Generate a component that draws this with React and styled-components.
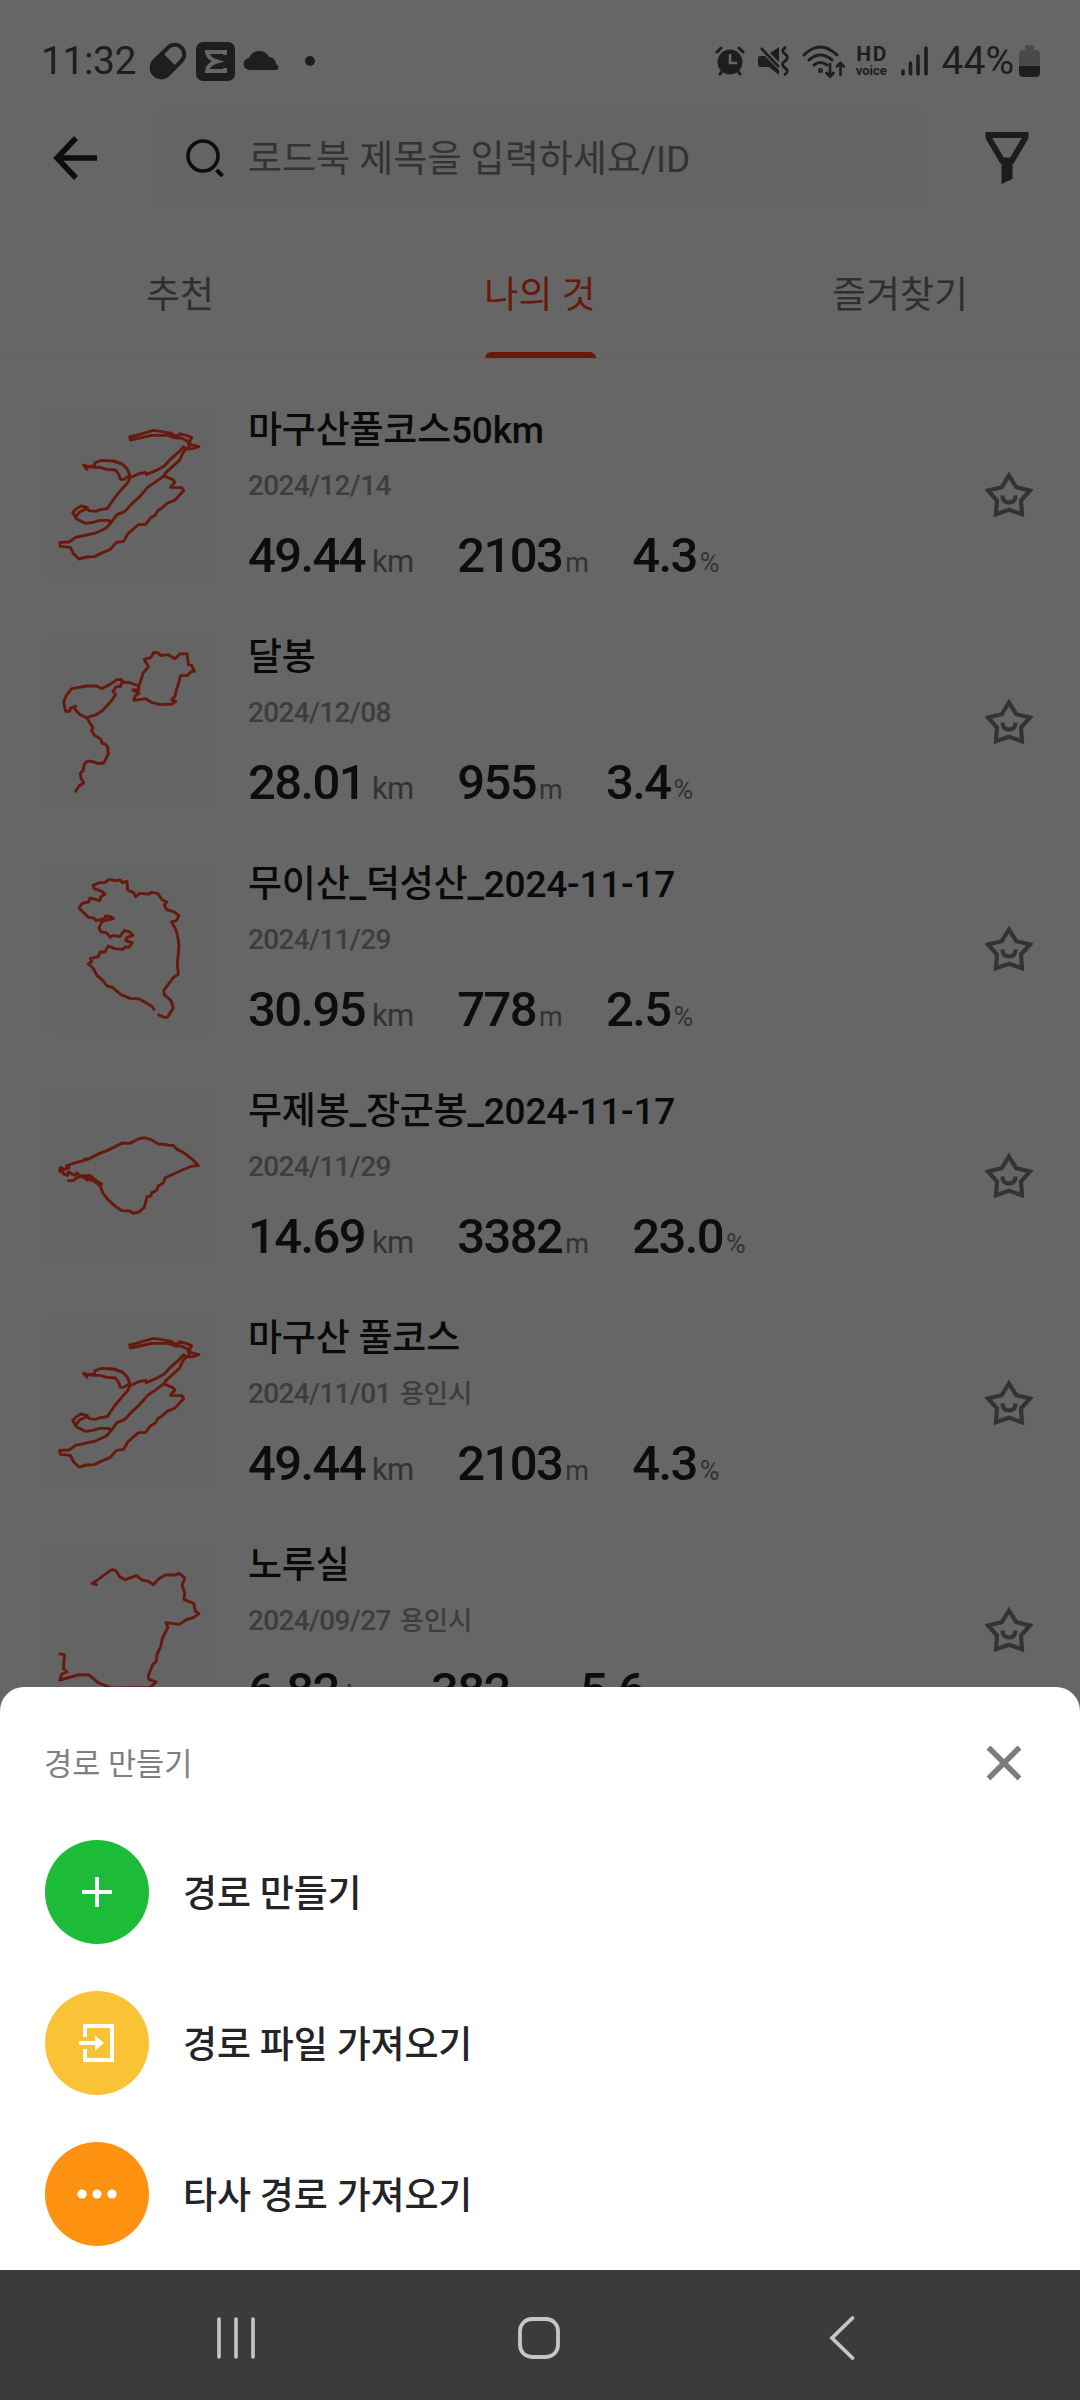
import React, { useState } from 'react';
import styled, { createGlobalStyle } from 'styled-components';

const makguPath =
  'M392 180 L390 171 L410 166 L438 158 L462 151 L482 154 L515 160 L530 170 L540 162 L560 166 L576 173 L570 183 L572 194 L598 200 L580 206 L560 207 L552 200 L535 218 L512 238 L494 258 L468 272 L440 284 L438 277 L418 281 L396 291 L384 290 L372 298 L362 298 L358 285 L348 270 L322 268 L300 262 L280 262 L264 260 L252 255 L262 268 L258 260 L284 258 L286 248 L305 241 L340 243 L368 252 L383 268 L392 290 L384 308 L366 328 L346 352 L330 375 L324 385 L298 390 L288 394 L268 392 L262 382 L244 378 L230 386 L219 397 L230 416 L256 430 L280 427 L300 421 L326 421 L334 428 L320 444 L288 459 L228 472 L208 486 L180 487 L182 499 L212 502 L222 522 L238 537 L262 531 L284 530 L304 520 L332 508 L350 487 L372 484 L384 462 L416 434 L438 433 L452 414 L468 404 L474 392 L490 382 L502 370 L526 360 L552 332 L546 323 L512 322 L526 306 L518 298 L498 290 L496 280 L516 262 L540 240 L550 218 L560 205 M392 180 L420 174 L456 166 L504 166 L530 174 L545 174 L565 184 L568 200 M496 285 L470 304 L444 322 L420 350 L398 370 L376 394 L352 404 L334 428 M262 385 L240 396 L230 408';

const routes = [
  {
    title: '마구산풀코스50km',
    date: '2024/12/14',
    km: '49.44',
    m: '2103',
    pct: '4.3',
    box: '130 84 519 519',
    path: makguPath,
  },
  {
    title: '달봉',
    date: '2024/12/08',
    km: '28.01',
    m: '955',
    pct: '3.4',
    box: '130 75 519 519',
    path: 'M228 544 L238 528 L252 519 L244 504 L242 490 L250 482 L254 462 L264 453 L284 456 L294 461 L312 459 L326 432 L324 410 L316 402 L308 400 L302 386 L284 376 L276 362 L280 354 L262 324 L240 313 L224 296 L228 288 L212 294 L210 304 L198 304 L192 276 L200 256 L216 236 L262 228 L290 228 L306 236 L330 224 L352 209 L364 208 L368 216 L390 218 L418 228 L430 190 L446 170 L434 148 L454 142 L462 128 L472 127 L484 137 L506 134 L526 146 L540 132 L562 131 L566 164 L576 166 L584 184 L574 185 L562 197 L542 197 L538 216 L530 240 L526 258 L516 270 L528 274 L518 282 L482 284 L458 278 L438 266 L402 271 L406 258 L418 250 L400 240 L418 240 L416 228 M368 212 L362 230 L350 230 L340 244 L348 254 L334 274 L308 302 L290 314 L264 322',
  },
  {
    title: '무이산_덕성산_2024-11-17',
    date: '2024/11/29',
    km: '30.95',
    m: '778',
    pct: '2.5',
    box: '130 66 519 519',
    path: 'M463 508 L456 499 L420 477 L392 475 L364 464 L338 442 L322 438 L310 422 L292 406 L280 384 L266 372 L276 364 L272 356 L296 350 L302 336 L316 336 L326 318 L344 326 L370 328 L378 320 L388 322 L398 308 L378 302 L382 292 L400 286 L390 276 L374 271 L360 290 L340 286 L332 292 L320 278 L304 276 L298 264 L306 246 L320 240 L342 236 L334 230 L318 228 L314 236 L290 242 L282 234 L266 232 L250 216 L238 204 L248 190 L266 186 L272 174 L300 182 L304 170 L316 162 L306 154 L284 146 L280 136 L300 128 L314 128 L330 118 L346 122 L362 120 L368 128 L382 124 L384 150 L402 158 L408 170 L420 160 L448 162 L456 157 L474 160 L488 180 L502 186 L494 194 L500 208 L524 216 L538 227 L530 242 L516 246 L530 272 L536 300 L538 320 L533 370 L536 402 L520 414 L492 452 L494 464 L514 482 L521 504 L503 532 L492 532 L477 524',
  },
  {
    title: '무제봉_장군봉_2024-11-17',
    date: '2024/11/29',
    km: '14.69',
    m: '3382',
    pct: '23.0',
    box: '130 87 519 519',
    path: 'M206 362 L220 362 L234 352 L250 350 L262 360 L280 358 L298 376 L306 372 L290 362 L270 346 L240 348 L232 338 L226 346 L206 336 L204 346 L192 342 L188 334 L180 334 L182 322 L192 328 L208 324 L200 318 L228 308 L252 302 L258 296 L250 302 L264 298 L300 280 L322 272 L368 249 L390 250 L416 237 L434 233 L452 238 L476 252 L500 254 L506 256 L520 256 L532 268 L552 278 L578 298 L596 317 L578 318 L548 330 L496 354 L492 368 L476 378 L470 392 L456 398 L454 408 L442 410 L434 442 L418 456 L400 460 L390 453 L366 452 L348 440 L326 420 L310 400 L300 374 L256 348 L266 356',
  },
  {
    title: '마구산 풀코스',
    date: '2024/11/01',
    place: '용인시',
    km: '49.44',
    m: '2103',
    pct: '4.3',
    box: '130 84 519 519',
    path: makguPath,
  },
  {
    title: '노루실',
    date: '2024/09/27',
    place: '용인시',
    km: '6.82',
    m: '382',
    pct: '5.6',
    box: '96 69 388 519',
    path: 'M216 194 L206 190 L216 182 L250 149 L260 152 L268 170 L280 179 L306 167 L318 180 L332 184 L344 194 L354 178 L370 165 L390 165 L402 160 L414 174 L408 196 L414 218 L412 238 L434 250 L438 274 L446 281 L434 292 L416 300 L402 313 L372 308 L376 322 L364 354 L360 380 L352 402 L350 424 L342 434 L332 468 L334 478 L350 486 L336 502 L250 504 L222 490 L198 464 L174 465 L134 480 L138 462 L150 456 L142 446 L144 404 L134 402',
  },
];

const tabs = ['추천', '나의 것', '즐겨찾기'];

const StatusIcons = () => (
  <svg width="140" height="40" viewBox="148 41 140 40" fill="#4d4d4d">
    <g transform="rotate(45 168 61)">
      <rect x="158.5" y="42" width="19" height="38" rx="9.5" fill="none" stroke="#4d4d4d" strokeWidth="4" />
      <path d="M158.5 61h19v9.500a9.500 9.500 0 0 1-19 0z" stroke="#4d4d4d" strokeWidth="4" />
    </g>
    <rect x="196" y="42" width="39" height="39" rx="7" />
    <path d="M225 55v-3h-18q1 7 10 9.500-9 2.500-10 9.500h18v-3" fill="none" stroke="#fff" strokeWidth="4" />
    <path d="M250 70a6 6 0 0 1-1-12 11 11 0 0 1 20-1 7 7 0 0 1 7 7 3.500 3.500 0 0 1 1 6z" />
  </svg>
);

const AlarmIcon = () => (
  <svg width="30" height="30" viewBox="0 0 30 30" fill="#4d4d4d" stroke="#4d4d4d" strokeLinecap="round">
    <circle cx="15" cy="16" r="12.500" stroke="none" />
    <path d="M2 6l4-4M28 6l-4-4M5 28l3-4M25 28l-3-4" strokeWidth="3" />
    <path d="M15 9v8h6" fill="none" stroke="#fff" strokeWidth="2.600" />
  </svg>
);

const MuteIcon = () => (
  <svg width="31" height="30" viewBox="0 0 31 30" fill="#4d4d4d">
    <path d="M2 10h5l14 14v5l-10-8H3q-3 0-3-3v-5q0-3 2-3zM12 7l9-6v15z" />
    <path d="M3 2l18 19" stroke="#4d4d4d" strokeWidth="2.600" />
    <path d="M28 1q-6 3.500-1 7t0 7 0 7-1 7" fill="none" stroke="#4d4d4d" strokeWidth="2.800" />
  </svg>
);

const WifiIcon = () => (
  <svg width="43" height="33" viewBox="0 0 43 33" fill="none" stroke="#4d4d4d" strokeWidth="3" strokeLinecap="round">
    <path d="M2 10q16-16 33 0M7 15q11.500-10 23 0M12 20q6-5 13 0" />
    <circle cx="18.500" cy="25.500" r="1" />
    <path d="M28 19v12M24.500 28l3.500 3.500 3.500-3.500M38.500 30V18M35 21.500l3.500-3.500 3.500 3.500" strokeWidth="2.700" />
  </svg>
);

const SignalIcon = () => (
  <svg width="27" height="30" viewBox="0 0 27 30" stroke="#4d4d4d" strokeWidth="3.600" strokeLinecap="round">
    <path d="M2 25v3M9.500 17v11M17 10v18M25 2v26" />
  </svg>
);

const BatteryIcon = () => (
  <svg width="22" height="33" viewBox="0 0 22 33">
    <path d="M6 5V2q0-2 2-2h5q2 0 2 2v3h2q4 0 4 4v13H0V9q0-4 4-4z" fill="#b8b8b8" />
    <path d="M0 21h21v7q0 4-4 4H4q-4 0-4-4z" fill="#4d4d4d" />
  </svg>
);

const BackIcon = () => (
  <svg width="46" height="44" viewBox="0 0 46 44" fill="none" stroke="#222" strokeWidth="5.500">
    <path d="M23 2L4 22l19 20M4 22h40" />
  </svg>
);

const SearchIcon = () => (
  <svg width="38" height="38" viewBox="0 0 38 38" fill="none" stroke="#222" strokeWidth="3.600">
    <circle cx="17" cy="17" r="15" />
    <path d="M30.500 31l6 6" strokeWidth="4" />
  </svg>
);

const FilterIcon = () => (
  <svg width="44" height="52" viewBox="0 0 44 52">
    <path d="M3.500 3h37v2.500L27 28.500H17L3.500 5.500z" fill="none" stroke="#45474e" strokeWidth="6" />
    <path d="M16.500 28h11v19l-11 5z" fill="#45474e" />
  </svg>
);

const StarIcon = () => (
  <svg width="48" height="47" viewBox="0 0 48 47" fill="none" stroke="#808080" strokeWidth="4.200">
    <path d="M24 4.500L31.200 16.200 45 19.500 36 29.500 37 43.200 24 38.800 11 43.200 12 29.500 3 19.500 16.800 16.200z" />
    <path d="M17.500 24.500q0 7 6.500 7t6.500-7" />
  </svg>
);

const CloseIcon = () => (
  <svg width="36" height="36" viewBox="0 0 36 36" stroke="#7c7c80" strokeWidth="5.500">
    <path d="M2.500 2.500l31 31M33.500 2.500l-31 31" />
  </svg>
);

const PlusIcon = () => (
  <svg width="32" height="32" viewBox="0 0 32 32" stroke="#fff" strokeWidth="4">
    <path d="M16 1v30M1 16h30" />
  </svg>
);

const ImportIcon = () => (
  <svg width="36" height="40" viewBox="0 0 36 40" fill="none" stroke="#fff" strokeWidth="4">
    <path d="M6 14V3h27v34H6V26M0 20h18" />
    <path d="M16 12.500l9 7.500-9 7.500z" fill="#fff" stroke="none" />
  </svg>
);

const DotsIcon = () => (
  <svg width="40" height="10" viewBox="0 0 40 10" fill="#fff">
    <circle cx="5" cy="5" r="4.600" />
    <circle cx="20" cy="5" r="4.600" />
    <circle cx="35" cy="5" r="4.600" />
  </svg>
);

const actions = [
  { label: '경로 만들기', color: '#1cbb38', icon: <PlusIcon /> },
  { label: '경로 파일 가져오기', color: '#fac336', icon: <ImportIcon /> },
  { label: '타사 경로 가져오기', color: '#ff9211', icon: <DotsIcon /> },
];

const RouteItem = ({ route }) => (
  <Row>
    <Thumb>
      <svg width="173" height="173" viewBox={route.box} preserveAspectRatio="none">
        <path
          d={route.path}
          fill="none"
          stroke="#ff3f20"
          strokeWidth="2.9"
          strokeLinejoin="round"
          strokeLinecap="round"
          vectorEffect="non-scaling-stroke"
        />
      </svg>
    </Thumb>
    <Info>
      <Title>{route.title}</Title>
      <Meta>
        <span>{route.date}</span>
        {route.place && <Place>{route.place}</Place>}
      </Meta>
      <Stats>
        <Stat>{route.km}<Unit $large>km</Unit></Stat>
        <Stat>{route.m}<Unit>m</Unit></Stat>
        <Stat>{route.pct}<Unit>%</Unit></Stat>
      </Stats>
    </Info>
    <FavoriteButton>
      <StarIcon />
    </FavoriteButton>
  </Row>
);

const App = () => {
  const [activeTab, setActiveTab] = useState('나의 것');

  return (
    <Screen>
      <GlobalStyle />
      <StatusBar>
        <StatusGroup>
          <Clock>11:32</Clock>
          <StatusIcons />
          <MoreDot />
        </StatusGroup>
        <StatusRight>
          <AlarmIcon />
          <MuteIcon />
          <WifiIcon />
          <HdVoice>
            <b>HD</b>
            <span>voice</span>
          </HdVoice>
          <SignalIcon />
          <BatteryGroup>
            <Percent>44%</Percent>
            <BatteryIcon />
          </BatteryGroup>
        </StatusRight>
      </StatusBar>

      <Header>
        <BackIcon />
        <SearchBox>
          <SearchIcon />
          <Placeholder>로드북 제목을 입력하세요/ID</Placeholder>
        </SearchBox>
        <FilterIcon />
      </Header>

      <TabBar>
        {tabs.map((tab) => (
          <Tab key={tab} $active={tab === activeTab} onClick={() => setActiveTab(tab)}>
            <TabLabel>{tab}</TabLabel>
          </Tab>
        ))}
      </TabBar>

      <List>
        {routes.map((route, index) => (
          <RouteItem key={index} route={route} />
        ))}
      </List>

      <Overlay>
        <Sheet>
          <SheetHeader>
            <SheetTitle>경로 만들기</SheetTitle>
            <CloseIcon />
          </SheetHeader>
          {actions.map((action) => (
            <Action key={action.label}>
              <ActionIcon $color={action.color}>{action.icon}</ActionIcon>
              <ActionLabel>{action.label}</ActionLabel>
            </Action>
          ))}
        </Sheet>
        <NavBar>
          <svg width="38" height="42" viewBox="0 0 38 42" stroke="#c5c6c6" strokeWidth="3.600" strokeLinecap="round">
            <path d="M2 2v38M19 2v38M36 2v38" />
          </svg>
          <HomeIcon width="42" height="42" viewBox="0 0 42 42" fill="none" stroke="#c5c6c6" strokeWidth="3.800">
            <rect x="2" y="2" width="38" height="38" rx="12" />
          </HomeIcon>
          <svg width="26" height="44" viewBox="0 0 26 44" fill="none" stroke="#c5c6c6" strokeWidth="3.800" strokeLinecap="round">
            <path d="M23.500 2L3 22l20.500 20" />
          </svg>
        </NavBar>
      </Overlay>
    </Screen>
  );
};

const GlobalStyle = createGlobalStyle`
  * {
    box-sizing: border-box;
  }

  body {
    margin: 0;
    font-family: Roboto, "Noto Sans CJK KR", sans-serif;
  }

  svg {
    display: block;
    flex-shrink: 0;
  }
`;

const Screen = styled.div`
  position: relative;
  width: 1080px;
  height: 2400px;
  overflow: hidden;
  background: #fff;
`;

const StatusBar = styled.div`
  display: flex;
  justify-content: space-between;
  height: 109px;
  padding: 41px 39px 0 41px;
  color: #4d4d4d;
`;

const StatusGroup = styled.div`
  display: flex;
  align-items: center;
  height: 40px;
`;

const StatusRight = styled(StatusGroup)`
  gap: 13.4px;
`;

const Clock = styled.div`
  width: 107px;
  font-size: 39px;
  line-height: 40px;
  letter-spacing: -0.4px;
`;

const MoreDot = styled.div`
  width: 10px;
  height: 10px;
  margin-left: 17px;
  border-radius: 50%;
  background: #4d4d4d;
`;

const HdVoice = styled.div`
  display: flex;
  flex-direction: column;
  align-items: center;
  width: 33px;
  margin-left: -4px;

  b {
    font-size: 21px;
    line-height: 19px;
    letter-spacing: 1.5px;
    margin-right: -1.5px;
  }

  span {
    font-size: 13px;
    font-weight: 700;
    line-height: 13px;
  }
`;

const BatteryGroup = styled.div`
  display: flex;
  align-items: center;
  gap: 5px;
`;

const Percent = styled.div`
  font-size: 39px;
  line-height: 40px;
`;

const Header = styled.div`
  display: flex;
  align-items: center;
  height: 97px;
  padding: 0 51px 0 53px;
`;

const SearchBox = styled.div`
  display: flex;
  flex: 1;
  align-items: center;
  gap: 24px;
  height: 97px;
  margin: 0 56px 0 51px;
  padding-left: 36px;
  border-radius: 12px;
  background: #fafafa;
`;

const Placeholder = styled.div`
  padding-top: 4px;
  color: #808080;
  font-size: 37px;
  line-height: 50px;
  white-space: nowrap;
`;

const TabBar = styled.div`
  display: grid;
  grid-template-columns: repeat(3, 1fr);
  height: 153px;
  border-bottom: 1px solid #f0f0f0;
`;

const Tab = styled.div`
  display: flex;
  justify-content: center;
  color: ${({ $active }) => ($active ? '#ff3f20' : '#77777a')};

  &::after {
    content: "";
    display: ${({ $active }) => ($active ? 'block' : 'none')};
    align-self: flex-end;
    width: 111px;
    height: 6px;
    margin-left: -111px;
    border-radius: 6px 6px 0 0;
    background: #ff3f20;
  }
`;

const TabLabel = styled.div`
  min-width: 111px;
  padding-top: 65px;
  font-size: 37px;
  line-height: 50px;
  text-align: center;
  white-space: nowrap;
`;

const List = styled.div`
  display: flex;
  flex-direction: column;
  gap: 54px;
  padding: 49px 47px 0 43px;
`;

const Row = styled.div`
  display: flex;
  align-items: flex-start;
  height: 173px;
`;

const Thumb = styled.div`
  width: 173px;
  height: 173px;
  border-radius: 11px;
  background: #fafafa;
`;

const Info = styled.div`
  flex: 1;
  margin-left: 32px;
`;

const Title = styled.div`
  height: 42px;
  padding-top: 2px;
  color: #1a1a1a;
  font-size: 37px;
  font-weight: 500;
  line-height: 42px;
  letter-spacing: -0.2px;
  white-space: nowrap;
`;

const Meta = styled.div`
  display: flex;
  gap: 9px;
  height: 40px;
  margin-top: 16px;
  color: #999;
  font-size: 28px;
  font-weight: 500;
  line-height: 40px;
  letter-spacing: -0.65px;
`;

const Place = styled.span`
  font-size: 26.5px;
  letter-spacing: -0.2px;
`;

const Stats = styled.div`
  display: flex;
  gap: 44px;
  height: 60px;
  margin-top: 20px;
`;

const Stat = styled.div`
  color: #202126;
  font-size: 49px;
  font-weight: 500;
  line-height: 60px;
  letter-spacing: -1.6px;
  white-space: nowrap;
`;

const Unit = styled.span`
  margin-left: ${({ $large }) => ($large ? '7px' : '3px')};
  color: #808080;
  font-size: ${({ $large }) => ($large ? '31px' : '27px')};
  font-weight: 400;
  letter-spacing: -0.8px;
`;

const FavoriteButton = styled.div`
  margin-top: 63px;
`;

const Overlay = styled.div`
  position: absolute;
  inset: 0;
  display: flex;
  flex-direction: column;
  justify-content: flex-end;
  background: rgba(0, 0, 0, 0.6);
`;

const Sheet = styled.div`
  height: 583px;
  border-radius: 24px 24px 0 0;
  background: #fff;
`;

const SheetHeader = styled.div`
  display: flex;
  align-items: center;
  justify-content: space-between;
  height: 129px;
  padding: 22px 58px 0 44px;
`;

const SheetTitle = styled.div`
  padding-top: 4px;
  color: #808080;
  font-size: 30.6px;
  line-height: 40px;
`;

const Action = styled.div`
  display: flex;
  align-items: center;
  height: 151px;
  padding-left: 45px;
`;

const ActionIcon = styled.div`
  display: flex;
  align-items: center;
  justify-content: center;
  width: 104px;
  height: 104px;
  border-radius: 50%;
  background: ${({ $color }) => $color};
`;

const ActionLabel = styled.div`
  margin-left: 34px;
  padding-top: 7px;
  color: #242428;
  font-size: 37px;
  font-weight: 500;
  line-height: 50px;
  letter-spacing: -0.15px;
`;

const NavBar = styled.div`
  display: flex;
  align-items: center;
  justify-content: space-between;
  height: 130px;
  padding: 5px 225px 0 217px;
  background: #3b3b3b;
`;

const HomeIcon = styled.svg`
  margin-right: 7px;
`;

export default App;
